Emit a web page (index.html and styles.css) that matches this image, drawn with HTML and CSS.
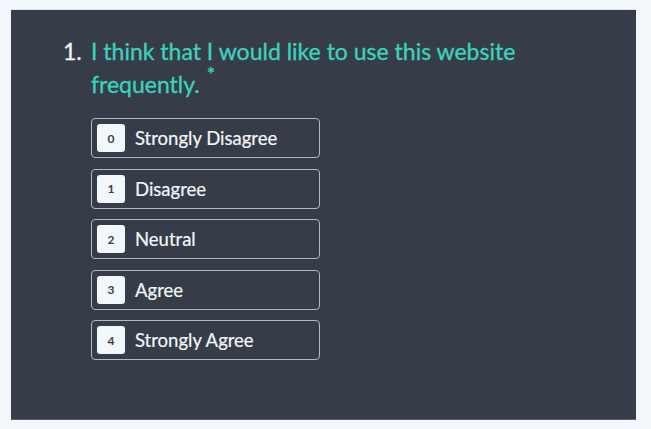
FILE: index.html
```html
<!DOCTYPE html>
<html lang="en">
<head>
<meta charset="utf-8">
<title>Survey question</title>
<link rel="stylesheet" href="styles.css">
</head>
<body>
<div class="card">
  <div class="question">
    <span class="qnum">1.</span>
    <div class="qbody">
      <h2 class="qtext">I think that I would like to use this website frequently.<span class="req">*</span></h2>
      <div class="options">
        <label class="option"><span class="key">0</span><span class="label">Strongly Disagree</span></label>
        <label class="option"><span class="key">1</span><span class="label">Disagree</span></label>
        <label class="option"><span class="key">2</span><span class="label">Neutral</span></label>
        <label class="option"><span class="key">3</span><span class="label">Agree</span></label>
        <label class="option"><span class="key">4</span><span class="label">Strongly Agree</span></label>
      </div>
    </div>
  </div>
</div>
</body>
</html>
```

FILE: styles.css
```css
html, body {
  margin: 0;
  padding: 0;
  background: #f2f7fb;
}
body {
  padding: 9px 15px 0 11px;
  font-family: "Lato", "Open Sans", sans-serif;
}
.card {
  width: 625px;
  height: 411px;
  box-sizing: border-box;
  background: #373d48;
  border-top: 1px solid #dce3e9;
  border-bottom: 1px solid #5b616a;
  padding: 25px 0 0 52px;
}
.question {
  display: flex;
}
.qnum {
  width: 28px;
  flex: none;
  color: #f1f4f8;
  font-size: 23px;
  line-height: 33px;
  -webkit-text-stroke: 0.3px #f1f4f8;
}
.qbody {
  flex: 1;
}
.qtext {
  margin: 0;
  width: 470px;
  color: #3ad3bf;
  font-weight: 400;
  font-size: 23px;
  line-height: 33px;
  -webkit-text-stroke: 0.3px #3ad3bf;
}
.req {
  font-size: 20px;
  line-height: 0;
  position: relative;
  top: -12px;
  margin-left: 7px;
}
.options {
  margin-top: 17px;
  display: flex;
  flex-direction: column;
  gap: 10.5px;
}
.option {
  width: 229px;
  height: 40px;
  box-sizing: border-box;
  border: 1px solid #a8bccb;
  border-radius: 4px;
  display: flex;
  align-items: center;
  padding-left: 5px;
  gap: 10px;
  color: #f3f6f9;
  font-size: 18.5px;
  -webkit-text-stroke: 0.2px #f3f6f9;
}
.key {
  width: 28px;
  height: 28px;
  flex: none;
  border-radius: 3px;
  background: #f2f7fb;
  color: #3a3f47;
  font-size: 12px;
  font-weight: 700;
  -webkit-text-stroke: 0;
  display: flex;
  align-items: center;
  justify-content: center;
}
```
